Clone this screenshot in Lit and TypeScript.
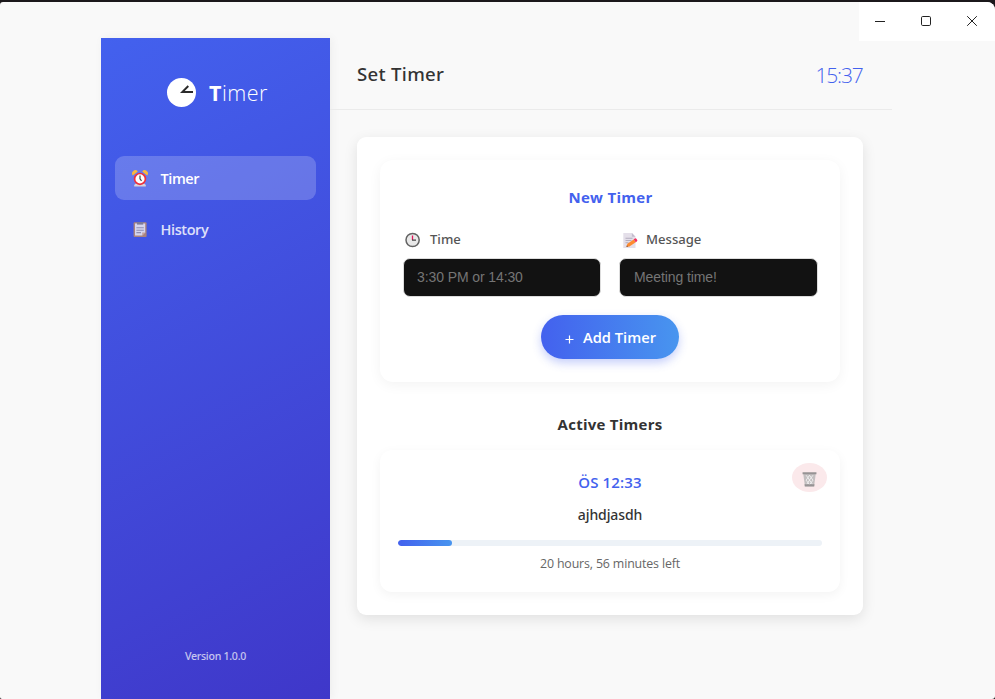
import { LitElement, html, css, svg } from "lit";
import { customElement, property, state } from "lit/decorators.js";
import { classMap } from "lit/directives/class-map.js";

const glyphs: Record<string, unknown> = {
  alarm: svg`
    <path d="M.8 5.4A3.1 3.1 0 0 1 5.8 1.4zM15.2 5.4A3.1 3.1 0 0 0 10.2 1.4z" fill="#fbb93a"/>
    <path d="M2.2 16.4v-1.3L3.6 13.6h8.8l1.4 1.5v1.3z" fill="#d5d2dc"/>
    <circle cx="8" cy="8.9" r="5.4" fill="#fff" stroke="#f0303c" stroke-width="1.7"/>
    <path d="M8 5.5v3.4l1.5 1.9" fill="none" stroke="#444" stroke-width="1.2"/>`,
  clipboard: svg`
    <rect x="1.6" y="1.2" width="13" height="14.8" rx="1" fill="#b88a70"/>
    <path d="M3 2.6h10.2v8.8l-3 3.2H3z" fill="#eae7f0"/>
    <path d="M10.2 14.6v-3.2h3z" fill="#d8ad92"/>
    <path d="M5 1h6.2v2.6H5z" fill="#84818f"/>
    <path d="M4.4 6.8h7.4M4.4 9.2h7.4M4.4 11.6h4.6" stroke="#9996ad" stroke-width="1.1"/>`,
  clock: svg`
    <circle cx="7.6" cy="8" r="6.6" fill="#e8e8e8" stroke="#636363" stroke-width="1.5"/>
    <path d="M7.5 3.4V8" stroke="#e3175a" stroke-width="1.3"/>
    <path d="M7 8.2h4" stroke="#444" stroke-width="1.2"/>`,
  memo: svg`
    <path d="M1.3 1h8.6l3.6 3.7V16H1.3z" fill="#e4dfe9"/>
    <path d="M9.9 1v3.7h3.6z" fill="#c3bccd"/>
    <path d="M3.5 6.2h7M3.5 8.5h6M3.5 10.8h3" stroke="#b3adbf" stroke-width="1.1"/>
    <path d="M4.4 14.9l1-3.2 6.3-4.2 2 2.8-6.3 4.2z" fill="#fd8b30"/>
    <path d="M11.7 7.5l1.2-.9a1.1 1.1 0 0 1 1.6.3l.6.9a1.1 1.1 0 0 1-.3 1.6l-1.1.9z" fill="#f4305f"/>
    <path d="M4.4 14.9l.5-1.7 1.2 1.3z" fill="#75503c"/>`,
  trash: svg`
    <path d="M1.4 2.6h13.2l-1.7 13H3.1z" fill="#c3bfc0"/>
    <path d="M4.4 4l1.9 2.6-1.9 2.6 1.9 2.6-1.3 2M8 4L6.3 6.6 8 9.2l-1.7 2.6L8 14.3M8 4l1.8 2.6L8 9.2l1.8 2.6L8 14.3M11.7 4L9.8 6.6l1.9 2.6-1.9 2.6 1.4 2" fill="none" stroke="#fff" stroke-width=".75"/>
    <path d="M.6 .8h14.8v2.2H.6zM2.7 13.6h10.6l-.3 2.4H3z" fill="#979394"/>`,
};

@customElement("app-glyph")
class AppGlyph extends LitElement {
  @property() name = "clock";
  static styles = css`
    :host { display: block; flex: none; width: 16px; height: 16px; }
    svg { display: block; width: 100%; height: 100%; overflow: visible; }
  `;
  render() {
    return html`<svg viewBox="0 0 16 16">${glyphs[this.name]}</svg>`;
  }
}

@customElement("app-sidebar")
class AppSidebar extends LitElement {
  @state() private active = "Timer";
  static styles = css`
    :host {
      display: flex; flex-direction: column; box-sizing: border-box; flex: none;
      width: 229px; padding: 40px 14px 34px; color: #fff;
      background: linear-gradient(152deg, #4361ee, #3f37c9);
      box-shadow: 2px 0 9px rgba(0, 0, 0, .05);
    }
    .logo { display: flex; align-items: center; height: 30px; padding-left: 52px; }
    .dial { width: 29px; height: 29px; margin-top: -1px; }
    .name { margin: -1px 0 0 13px; font-size: 21.5px; line-height: 30px; font-weight: 300; letter-spacing: .5px; }
    .name b { font-weight: 700; }
    nav { display: flex; flex-direction: column; gap: 7px; margin-top: 48px; }
    .item {
      display: flex; align-items: center; height: 44px; padding: 0 17px; border-radius: 9px;
      font-size: 14.5px; font-weight: 600; letter-spacing: -.4px; cursor: pointer;
    }
    .item span { margin-left: 12.5px; opacity: .82; }
    .item app-glyph { opacity: .88; }
    .active { background: rgba(255, 255, 255, .2); }
    .active span, .active app-glyph { opacity: 1; }
    .version { margin-top: auto; text-align: center; font: 500 10.6px/18px "Noto Sans", sans-serif; letter-spacing: -.28px; opacity: .7; }
  `;
  render() {
    const items = [["Timer", "alarm"], ["History", "clipboard"]];
    return html`
      <div class="logo">
        <svg class="dial" viewBox="0 0 29 29">
          <circle cx="14.5" cy="14.5" r="14.5" fill="#fff"/>
          <path d="M21.3 8L15.3 14H26" fill="none" stroke="#2b2b2b" stroke-width="1.9"/>
        </svg>
        <div class="name"><b>T</b>imer</div>
      </div>
      <nav>
        ${items.map(([label, icon]) => html`
          <div class=${classMap({ item: true, active: this.active === label })} @click=${() => (this.active = label)}>
            <app-glyph name=${icon}></app-glyph><span>${label}</span>
          </div>`)}
      </nav>
      <div class="version">Version 1.0.0</div>`;
  }
}

@customElement("timer-form")
class TimerForm extends LitElement {
  static styles = css`
    :host {
      display: block; box-sizing: border-box; height: 222px; padding: 25px 22px 0 23px;
      border-radius: 13px; background: #fff; box-shadow: 0 3px 13px rgba(0, 0, 0, .05);
    }
    h2 { margin: 0; text-align: center; font-size: 15px; line-height: 24px; font-weight: 700; letter-spacing: .3px; color: #4361ee; }
    .fields { display: grid; grid-template-columns: 198px 199px; gap: 18px; margin-top: 19px; }
    label { display: flex; align-items: center; height: 22px; padding-left: 2px; font: 500 13.1px "Noto Sans", sans-serif; color: #555; }
    label app-glyph { margin: 1px 9px 0 0; }
    .second { padding-left: 3px; }
    .second app-glyph { margin-right: 8px; }
    input {
      display: block; box-sizing: border-box; width: 100%; height: 39px; margin-top: 8px; padding: 0 13px 2px;
      border: 1px solid #ddd; border-radius: 7px; background: #121212; color: #fff;
      font: 14px "Liberation Sans", Arial, sans-serif; letter-spacing: -.1px; outline: none;
    }
    .second + input { padding-left: 14px; }
    input::placeholder { color: #757575; opacity: 1; }
    button {
      display: flex; align-items: center; justify-content: center; width: 138px; height: 44px;
      margin: 18px auto 0 138px; padding: 0; border: 0; border-radius: 22px; color: #fff;
      background: linear-gradient(90deg, #4361ee, #4895ef); box-shadow: 0 4px 10px rgba(67, 97, 238, .3);
      font: 600 14.7px "Open Sans", sans-serif;
    }
    .plus { width: 9px; height: 9px; margin: 4px 9px 0 1px; }
  `;
  render() {
    return html`
      <h2>New Timer</h2>
      <div class="fields">
        <div>
          <label><app-glyph name="clock"></app-glyph>Time</label>
          <input placeholder="3:30 PM or 14:30">
        </div>
        <div>
          <label class="second"><app-glyph name="memo"></app-glyph>Message</label>
          <input placeholder="Meeting time!">
        </div>
      </div>
      <button>
        <svg class="plus" viewBox="0 0 9 9"><path d="M4.5 .5v8M.5 4.5h8" stroke="#fff" stroke-width="1.2"/></svg>
        Add Timer
      </button>`;
  }
}

@customElement("timer-card")
class TimerCard extends LitElement {
  @property() time = "";
  @property() message = "";
  @property() remaining = "";
  @property({ type: Number }) progress = 0;
  static styles = css`
    :host {
      display: block; position: relative; box-sizing: border-box; height: 142px; padding: 20px 18px 0;
      border-radius: 12px; background: #fff; box-shadow: 0 3px 11px rgba(0, 0, 0, .05); text-align: center;
    }
    .time { font-size: 15px; line-height: 24px; font-weight: 600; letter-spacing: .15px; color: #4361ee; }
    .message { margin-top: 10px; font: 500 14px/22px "Noto Sans", sans-serif; letter-spacing: -.1px; color: #333; }
    .track { height: 6px; margin-top: 14px; border-radius: 3px; background: #edf2f7; overflow: hidden; }
    .fill { height: 100%; border-radius: 3px; background: linear-gradient(90deg, #4361ee, #4895ef); }
    .left { margin-top: 8px; font-size: 12.4px; line-height: 20px; letter-spacing: -.15px; color: #666; }
    .delete {
      position: absolute; top: 13px; right: 13px; display: grid; place-items: center;
      width: 35px; height: 29px; padding: 2px 1px 0 0; border: 0; border-radius: 50%; background: #fbe9eb;
    }
    .delete app-glyph { width: 15px; }
  `;
  render() {
    return html`
      <button class="delete" aria-label="Delete"><app-glyph name="trash"></app-glyph></button>
      <div class="time">${this.time}</div>
      <div class="message">${this.message}</div>
      <div class="track"><div class="fill" style="width:${this.progress}%"></div></div>
      <div class="left">${this.remaining}</div>`;
  }
}

@customElement("app-root")
class AppRoot extends LitElement {
  static styles = css`
    :host {
      display: block; box-sizing: border-box; height: 699px; padding-top: 2px; overflow: hidden;
      background: #1b181b; font-family: "Open Sans", "Noto Sans", sans-serif;
    }
    .window {
      position: relative; display: flex; box-sizing: border-box; height: 697px; padding: 36px 103px 0 101px;
      border-radius: 3px 8px 3px 2px; background: #f9f9f9; overflow: hidden;
    }
    .controls {
      position: absolute; top: 0; right: 0; display: flex; width: 136px; height: 39px; background: #fff;
    }
    .controls svg { display: block; width: 136px; height: 39px; }
    main { flex: 1; display: flex; flex-direction: column; }
    header {
      display: flex; justify-content: space-between; align-items: center; box-sizing: border-box;
      height: 72px; padding: 0 29px 0 27px; border-bottom: 1px solid #ebebeb;
    }
    h1 { margin: 0; font: 500 18.6px/28px "Noto Sans", sans-serif; letter-spacing: .3px; color: #333; }
    .now { margin: 2px .5px 0 0; font-size: 21px; line-height: 30px; font-weight: 300; letter-spacing: -1.2px; color: #4361ee; }
    .panel {
      box-sizing: border-box; width: 506px; height: 478px; margin: 27px 0 0 27px; padding: 23px;
      border-radius: 9px; background: #fff; box-shadow: 0 4px 14px rgba(0, 0, 0, .1);
    }
    h2 { margin: 30px 0 14px; text-align: center; font-size: 15px; line-height: 24px; font-weight: 700; letter-spacing: .25px; color: #333; }
  `;
  render() {
    return html`
      <div class="window">
        <app-sidebar></app-sidebar>
        <main>
          <header><h1>Set Timer</h1><div class="now">15:37</div></header>
          <section class="panel">
            <timer-form></timer-form>
            <h2>Active Timers</h2>
            <timer-card time="ÖS 12:33" message="ajhdjasdh" remaining="20 hours, 56 minutes left" progress="12.75"></timer-card>
          </section>
        </main>
        <div class="controls">
          <svg viewBox="0 0 136 39" fill="none" stroke="#222" stroke-width="1">
            <path d="M16 19.5h10"/><rect x="62.5" y="14.5" width="9" height="9" rx="1.2"/>
            <path d="M108.2 14.2l9.6 9.6M117.8 14.2l-9.6 9.6"/>
          </svg>
        </div>
      </div>`;
  }
}
